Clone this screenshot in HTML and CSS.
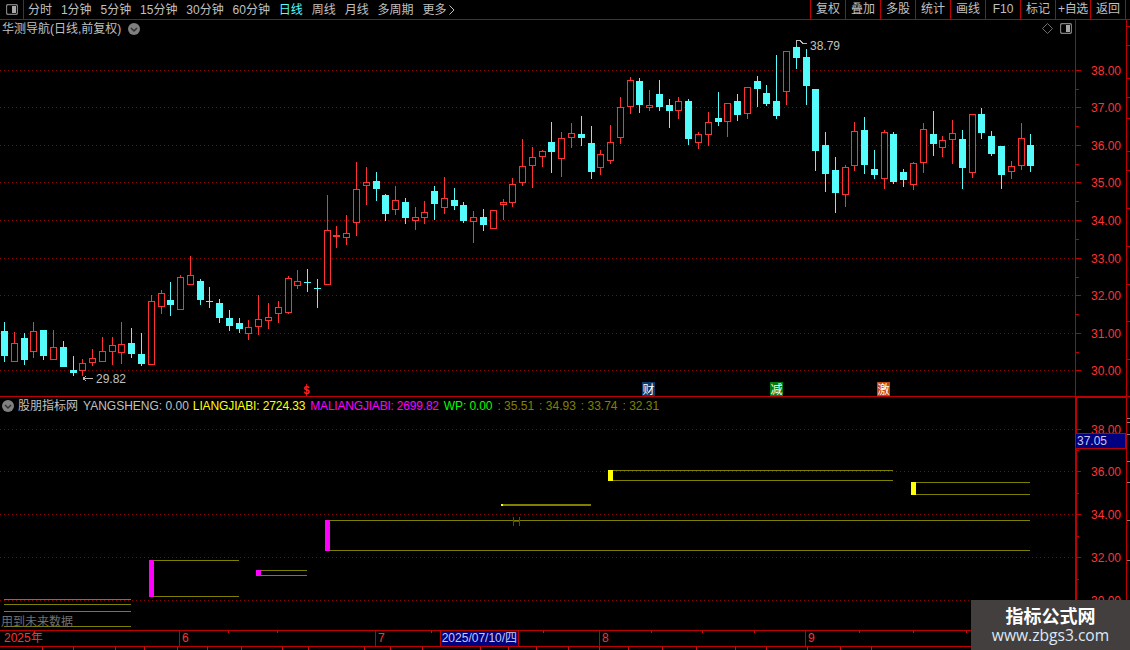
FILE: index.html
```html
<!DOCTYPE html>
<html lang="zh-CN">
<head>
<meta charset="utf-8">
<title>华测导航</title>
<link rel="stylesheet" href="styles.css">
</head>
<body>
<div class="app">
  <header class="toolbar">
    <div class="toggle">
      <svg class="icon-panel" viewBox="0 0 12 11"><rect class="panel-frame" x="0.5" y="0.5" width="11" height="10" rx="2"/><rect class="panel-fill" x="6" y="2" width="4" height="7"/></svg>
    </div>
    <nav class="periods">
      <span>分时</span><span>1分钟</span><span>5分钟</span><span>15分钟</span><span>30分钟</span><span>60分钟</span>
      <span class="active">日线</span><span>周线</span><span>月线</span><span>多周期</span>
      <span class="more">更多<svg class="chev-right" viewBox="0 0 6 10"><path d="M0.5 0.5 L5 5 L0.5 9.5"/></svg></span>
    </nav>
    <div class="actions">
      <span>复权</span><span>叠加</span><span>多股</span><span>统计</span><span>画线</span><span>F10</span><span>标记</span><span class="add">+自选</span><span>返回</span>
    </div>
  </header>

  <section class="panel main">
    <svg class="chart" id="mainChart" viewBox="0 20 1130 376"></svg>
    <div class="plot">
      <div class="legend">
        <span class="name">华测导航(日线,前复权)</span>
        <svg class="icon-circle" viewBox="0 0 12 12"><circle class="circle-bg" cx="6" cy="6" r="6"/><path class="circle-chev" d="M3 5 L6 8 L9 5"/></svg>
        <span class="tools">
          <svg class="icon-diamond" viewBox="0 0 11 11"><path d="M5.5 0.5 L10.5 5.5 L5.5 10.5 L0.5 5.5 Z"/></svg>
          <svg class="icon-panel" viewBox="0 0 12 11"><rect class="panel-frame" x="0.5" y="0.5" width="11" height="10" rx="2"/><rect class="panel-fill" x="6" y="2" width="4" height="7"/></svg>
        </span>
      </div>
    </div>
    <div class="axis"></div>
  </section>

  <section class="panel sub">
    <svg class="chart" id="subChart" viewBox="0 397 1130 233"></svg>
    <div class="plot">
      <div class="legend indicator">
        <svg class="icon-circle" viewBox="0 0 12 12"><circle class="circle-bg" cx="6" cy="6" r="6"/><path class="circle-chev" d="M3 5 L6 8 L9 5"/></svg>
        <span class="name">股朋指标网</span>
        <span class="name">YANGSHENG: 0.00</span>
        <span class="yellow">LIANGJIABI: 2724.33</span>
        <span class="magenta">MALIANGJIABI: 2699.82</span>
        <span class="green">WP: 0.00</span>
        <span class="olive">: 35.51</span>
        <span class="olive">: 34.93</span>
        <span class="olive">: 33.74</span>
        <span class="olive">: 32.31</span>
      </div>
    </div>
    <div class="axis axis-sub"></div>
    <div class="price-tag">37.05</div>
  </section>

  <footer class="timebar">
    <svg class="chart" id="timeTicks" viewBox="0 630 1130 20"></svg>
    <div class="cell cell-year">2025年</div>
    <div class="cell cell-m6">6</div>
    <div class="cell cell-m7">7<span class="cursor-date">2025/07/10/四</span></div>
    <div class="cell cell-m8">8</div>
    <div class="cell cell-m9">9</div>
  </footer>
  <div class="status"></div>

  <aside class="watermark">
    <div class="wm-title">指标公式网</div>
    <div class="wm-url">www.zbgs3.com</div>
  </aside>
</div>
<script src="chart.js"></script>
</body>
</html>
```
FILE: styles.css
```css
* { box-sizing: border-box; }
html, body { margin: 0; padding: 0; background: #000; }
body {
  width: 1130px; height: 650px; overflow: hidden;
  font: 12px/1 "Liberation Sans", "Noto Sans CJK SC", sans-serif;
  color: #c0c0c0;
}
.app { position: relative; display: flex; flex-direction: column; height: 650px; }

/* toolbar */
.toolbar { display: flex; height: 20px; border-bottom: 1px solid #c00000; flex: none; }
.toggle { width: 24px; border-right: 1px solid #c00000; display: flex; align-items: center; justify-content: center; }
.icon-panel { width: 12px; height: 11px; display: block; }
.panel-frame { fill: none; stroke: #808080; stroke-width: 1.3; }
.panel-fill { fill: #a8a8a8; }
.periods { display: flex; align-items: center; gap: 8.9px; padding-left: 4px; }
.periods .active { color: #54fcfc; }
.more { display: flex; align-items: center; gap: 3px; }
.chev-right { width: 6px; height: 10px; fill: none; stroke: #c0c0c0; stroke-width: 1; }
.actions { display: flex; margin-left: auto; margin-right: 4px; border-right: 1px solid #c00000; }
.actions span { width: 35px; border-left: 1px solid #c00000; text-align: center; line-height: 18px; white-space: nowrap; }
.actions .add { letter-spacing: -0.4px; }

/* panels */
.panel { position: relative; display: flex; flex: none; border-bottom: 1px solid #c00000; }
.main { height: 377px; }
.sub { height: 234px; }
.plot { flex: 1; position: relative; }
.axis { width: 52px; margin-right: 3px; border-left: 1px solid #c00000; border-right: 1px solid #c00000; position: relative; }
.axis-sub { border-left-width: 2px; border-top: 1px solid #c00000; }
.chart { position: absolute; left: 0; top: 0; width: 1130px; height: 100%; display: block; shape-rendering: crispEdges; }
.legend { display: flex; align-items: center; position: relative; height: 18px; padding-left: 2px; gap: 7px; }
.legend .name { white-space: pre; }
.tools { margin-left: auto; margin-right: 3px; display: flex; align-items: center; gap: 7px; margin-top: -1px; }
.icon-diamond { width: 11px; height: 11px; fill: none; stroke: #707070; stroke-width: 1; display: block; }
.icon-circle { width: 12px; height: 12px; flex: none; display: block; }
.circle-bg { fill: #808080; }
.circle-chev { fill: none; stroke: #303030; stroke-width: 1.5; }
.indicator { gap: 5px; height: 17px; }
.indicator .icon-circle { margin-right: -1px; }
.yellow { color: #ffff00; letter-spacing: -0.12px; margin-left: -1px; }
.magenta { color: #ff00ff; letter-spacing: -0.2px; }
.green { color: #00ff00; letter-spacing: -0.1px; }
.olive { color: #808000; }

.price-tag {
  position: absolute; left: 1076px; top: 36px; width: 50px; height: 16px;
  background: #000080; border: 1px solid #c00000; border-left-width: 0;
  color: #c8c8f0; line-height: 14px; padding-left: 1px;
}

/* time axis */
.timebar { position: relative; display: flex; height: 16px; flex: none; border-bottom: 1px solid #c00000; color: #ff3232; line-height: 15px; }
.timebar .chart { height: 20px; overflow: visible; top: -1px; }
.cell { position: relative; padding-left: 2px; border-left: 1px solid #c00000; display: flex; }
.cell-year { width: 179px; border-left: 0; padding-left: 4px; }
.cell-m6 { width: 196px; }
.cell-m7 { width: 224px; }
.cell-m8 { width: 206px; }
.cell-m9 { flex: 1; }
.cursor-date { margin-left: 55px; width: 79px; height: 15px; background: #000080; color: #c8c8f0; border-left: 1px solid #c00000; border-right: 1px solid #c00000; padding-left: 1px; white-space: nowrap; }
.status { height: 3px; flex: none; }

/* watermark */
.watermark { position: absolute; right: 0; bottom: 0; width: 159px; height: 50px; background: #443f3f; text-align: center; color: #fff; }
.wm-title { font: bold 18px/20px "Noto Sans CJK SC", sans-serif; margin-top: 5px; }
.wm-url { font: 15.6px/18px "Open Sans", sans-serif; color: #dde8f6; margin-top: 1px; }

/* svg parts */
.grid { stroke: #8c0000; stroke-width: 1; stroke-dasharray: 1 3; fill: none; shape-rendering: geometricPrecision; }
.axis-tick { stroke: #c00000; stroke-width: 1; fill: none; }
.side-tick { stroke: #808080; stroke-width: 1; fill: none; }
.axis-label { fill: #ff3232; font: 12px "Liberation Sans", sans-serif; text-anchor: end; }
.wick-up, .body-up { stroke: #ff3232; stroke-width: 1; }
.body-up { fill: #000; }
.wick-down { stroke: #54fcfc; stroke-width: 1; }
.body-down { fill: #54fcfc; }
.doji-up { fill: #ff3232; }
.extreme { fill: #c0c0c0; font: 12px "Liberation Sans", sans-serif; }
.marker { stroke: #b8b8b8; stroke-width: 1; fill: none; }
.signal { fill: #fff; font: 12px "Noto Sans CJK SC", sans-serif; text-anchor: middle; }
.signal-dollar { fill: #ff2020; font: bold 11px "Liberation Sans", sans-serif; text-anchor: middle; }
.sig-blue { fill: #0a3a6e; }
.sig-green { fill: #007c10; }
.sig-orange { fill: #c04a10; }
.rail { stroke: #808000; stroke-width: 1; fill: none; }
.rail-thick { stroke: #808000; stroke-width: 2; fill: none; }
.bar-magenta { fill: #ff00ff; }
.bar-yellow { fill: #ffff00; }
.tick-red { stroke: #d01010; stroke-width: 1; fill: none; }
.warn { fill: #707070; font: 12px "Liberation Sans", "Noto Sans CJK SC", sans-serif; }
```
FILE: chart.js
```js
const NS = 'http://www.w3.org/2000/svg';
function add(svg, tag, cls, attrs, text) {
  const el = document.createElementNS(NS, tag);
  el.setAttribute('class', cls);
  for (const k in attrs) el.setAttribute(k, attrs[k]);
  if (text !== undefined) el.textContent = text;
  svg.appendChild(el);
  return el;
}
const line = (svg, cls, x1, y1, x2, y2) => add(svg, 'line', cls, { x1, y1, x2, y2 });

/* candles: [x, cyan?, wickTop, bodyTop, bodyBottom, wickBottom] measured in 3x crops */
const sets = [
  { ox: 0, oy: 150, items: [
    [13,1,516,543,618,638],[43,0,546,579,636,638],[73,1,549,564,630,645],[100,0,516,544,608,624],
    [130,1,540,540,618,630],[160,0,540,592,630,630],[190,1,573,591,651,651],[220,1,618,660,669,678],
    [247,0,627,639,665,678],[277,0,597,625,641,648],[307,0,561,604,636,636],[337,0,561,586,608,645],
    [364,0,516,583,611,642],[394,1,534,579,612,624],[424,1,549,612,642,648],[454,0,435,454,645,645],
    [484,0,420,430,473,492],[511,1,396,450,465,498],[541,0,375,382,480,480],[571,0,318,376,405,405],
    [601,1,387,393,450,465],[628,1,411,453,456,474],[658,1,447,459,504,519],[688,1,480,504,528,543],
    [718,1,504,519,537,549],[745,0,510,532,552,570],[775,0,435,508,533,555],[805,0,459,502,515,537],
    [835,0,453,472,492,519],[865,0,378,385,489,492],[892,0,360,394,410,417],[922,1,357,396,399,426],
    [952,1,387,414,417,474],[982,0,135,241,405,405],[1009,0,228,256,262,294],[1039,0,195,250,266,285]
  ]},
  { ox: 340, oy: 60, items: [
    [49,0,306,388,491,528],[79,0,321,367,380,435],[109,1,336,363,387,423],[136,1,402,405,462,483],
    [166,0,378,421,450,465],[196,1,414,426,474,492],[226,0,441,472,483,510],[253,0,423,457,476,492],
    [283,1,378,393,432,480],[313,0,351,415,444,462],[343,1,384,420,438,450],[370,1,426,435,483,489],
    [400,0,453,472,488,549],[430,1,447,471,495,513],[460,0,451,451,507,507],[490,0,417,427,437,480],
    [517,0,354,373,429,441],[547,0,237,319,369,378],[577,0,261,292,320,384],[607,0,270,274,293,321],
    [634,1,186,246,276,339],[664,0,216,235,299,351],[694,0,189,220,236,264],[724,1,168,222,234,258],
    [754,1,198,249,336,357],[781,0,270,283,326,345],[811,0,195,247,305,312],[841,0,111,142,236,252],
    [871,0,51,61,143,162],[898,1,54,63,135,159],[928,0,90,136,144,153],[958,1,60,102,141,153],
    [988,1,117,135,153,204],[1015,0,111,124,155,177],[1045,1,117,123,237,255]
  ]},
  { ox: 680, oy: 30, items: [
    [55,0,306,313,341,357],[85,0,246,277,317,348],[115,1,186,264,276,288],[142,0,219,220,278,321],
    [172,1,192,213,255,273],[202,0,171,172,254,267],[232,1,138,153,177,232],[259,1,165,189,222,228],
    [289,1,75,213,258,267],[319,0,63,64,187,225],[349,1,30,52,84,118],[379,1,57,81,168,225],
    [406,1,177,177,363,423],[436,1,306,345,432,486],[466,1,381,420,489,549],[496,0,405,412,497,531],
    [523,0,276,304,410,423],[553,1,261,300,405,432],[583,1,360,417,435,447],[613,0,300,307,449,477],
    [640,1,306,312,456,462],[670,1,417,426,450,471],[700,0,396,400,467,480],[730,0,279,298,401,429],
    [760,1,243,312,342,378],[787,0,318,331,356,381],[817,0,270,310,332,402],[847,1,300,327,414,477],
    [877,0,252,253,431,444],[904,1,234,252,309,327],[934,1,303,318,372,378],[964,1,348,348,435,477],
    [994,0,393,409,426,447],[1024,0,279,325,410,420],[1051,1,312,345,408,426]
  ]}
];

const main = document.getElementById('mainChart');
const sub = document.getElementById('subChart');
const ticks = document.getElementById('timeTicks');

/* main grid and axis */
[[38,70],[37,107],[36,145],[35,182],[34,220],[33,258],[32,295],[31,333],[30,370]].forEach(([v, y], i, all) => {
  line(main, 'grid', 0, y + .5, 1075, y + .5);
  line(main, 'axis-tick', 1076, y + .5, 1081, y + .5);
  add(main, 'text', 'axis-label', { x: 1121, y: y + 5 }, v.toFixed(2));
  if (i < all.length - 1) {
    const m = Math.round((y + all[i + 1][1]) / 2);
    line(main, 'axis-tick', 1076, m + .5, 1079, m + .5);
  }
});
[26, 45, 78, 97, 118, 151, 170, 208, 246, 284, 321, 359].forEach(y => line(main, 'axis-tick', 1126, y + .5, 1130, y + .5));

/* candles */
sets.forEach(({ ox, oy, items }) => items.forEach(([xz, cyan, wt, bt, bb, wb]) => {
  const col = ox + Math.floor(xz / 3);
  const yOf = v => oy + Math.floor(v / 3);
  const top = yOf(bt), bottom = Math.max(yOf(bb), top + 1);
  line(main, cyan ? 'wick-down' : 'wick-up', col + .5, yOf(wt), col + .5, yOf(wb));
  if (cyan) {
    add(main, 'rect', 'body-down', { x: col - 3, y: top, width: 7, height: bottom - top });
  } else if (bottom - top <= 2) {
    add(main, 'rect', 'doji-up', { x: col - 3, y: top, width: 7, height: bottom - top });
  } else {
    add(main, 'rect', 'body-up', { x: col - 2.5, y: top + .5, width: 6, height: bottom - top - 1 });
  }
}));

/* extreme labels */
add(main, 'path', 'marker', { d: 'M796.5 46V40.5H800L803 43.5H807' });
add(main, 'text', 'extreme', { x: 810, y: 50 }, '38.79');
add(main, 'path', 'marker', { d: 'M93 378.5H83M83 378.5L86 376M83 378.5L86 381' });
add(main, 'text', 'extreme', { x: 96, y: 383 }, '29.82');

/* signals */
line(main, 'tick-red', 306.5, 384, 306.5, 396);
add(main, 'text', 'signal-dollar', { x: 306.5, y: 394 }, '$');
[[642, 'sig-blue', '财'], [770, 'sig-green', '减'], [877, 'sig-orange', '激']].forEach(([x, cls, ch]) => {
  add(main, 'rect', cls, { x, y: 382, width: 13, height: 14 });
  add(main, 'text', 'signal', { x: x + 6.5, y: 393.5 }, ch);
});

/* sub grid and axis */
[[38,429],[36,471],[34,514],[32,557],[30,600]].forEach(([v, y], i, all) => {
  line(sub, 'grid', 0, y + .5, 1075, y + .5);
  line(sub, 'axis-tick', 1077, y + .5, 1081, y + .5);
  add(sub, 'text', 'axis-label', { x: 1121, y: y + 5 }, v.toFixed(2));
  if (i < all.length - 1) {
    const m = Math.round((y + all[i + 1][1]) / 2);
    line(sub, 'axis-tick', 1077, m + .5, 1079, m + .5);
  }
});
[418, 422, 434, 461, 482, 520, 560].forEach(y => line(sub, 'side-tick', 1127, y + .5, 1130, y + .5));

/* price channels: [barX, top, bottom, railEnd, barClass] */
[[149,560,597,239,'bar-magenta'],[256,570,576,307,'bar-magenta'],[325,520,551,1030,'bar-magenta'],
 [608,470,481,893,'bar-yellow'],[911,482,495,1030,'bar-yellow']].forEach(([x, t, b, end, cls]) => {
  line(sub, 'rail', x + 5, t + .5, end, t + .5);
  line(sub, 'rail', x + 5, b - .5, end, b - .5);
  add(sub, 'rect', cls, { x, y: t, width: 5, height: b - t });
});
[599, 604, 611, 626].forEach(y => line(sub, 'rail', 4, y + .5, 131, y + .5));
line(sub, 'rail-thick', 501, 505, 591, 505);
add(sub, 'rect', 'bar-yellow', { x: 501, y: 504, width: 2, height: 2 });
add(sub, 'path', 'tick-red', { d: 'M513.5 517V526M519.5 517V526M513.5 521.5H519.5' });
add(sub, 'text', 'warn', { x: 1, y: 626 }, '用到未来数据');

/* time ticks */
[228, 277, 431, 543, 651, 702, 754, 859, 913, 966].forEach(x => line(ticks, 'tick-red', x + .5, 631, x + .5, 633));
[42, 73, 115, 144, 177, 207, 241, 282, 308, 364, 390, 422, 480, 508, 536, 568, 599, 628, 662, 696, 735, 766, 807, 840, 871]
  .forEach(x => line(ticks, 'tick-red', x + .5, 647, x + .5, 650));
```
